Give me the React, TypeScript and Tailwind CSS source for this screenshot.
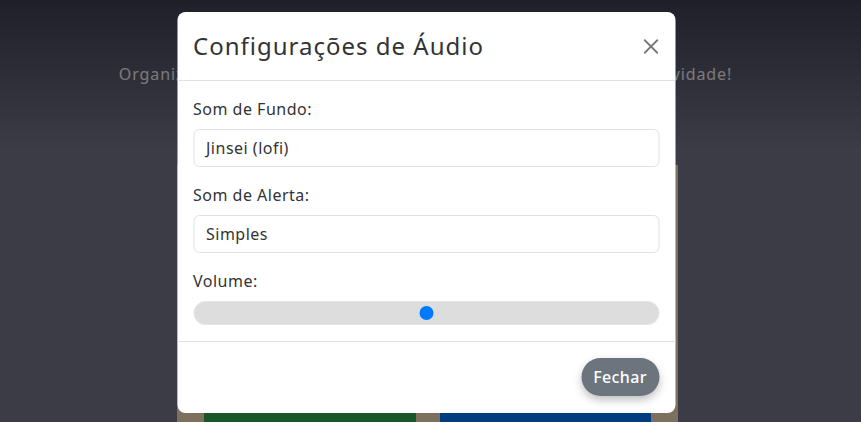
import { X } from 'lucide-react';

const font = { fontFamily: '"Noto Sans", "Liberation Sans", sans-serif' };

export default function App() {
  return (
    <div
      className="relative min-h-screen h-[422px] overflow-hidden bg-gradient-to-b from-[#404054] to-[#78788c] to-[35%] text-[#333]"
      style={font}
    >
      {/* page behind the modal */}
      <div className="flex flex-col items-center pt-[62px]">
        <p className="text-[16px] tracking-[0.9px] text-[#f4f4f4] -ml-[10px]">
          Organize suas tarefas com sons relaxantes e aumente sua produtividade!
        </p>
        <div className="mt-[79px] w-[501px] h-[300px] bg-[#fae0be] grid grid-cols-2 gap-6 px-[27px] pt-[248px] -ml-[6px]">
          <div className="bg-[#2eaa54]" />
          <div className="bg-[#007cff]" />
        </div>
      </div>

      {/* backdrop + modal */}
      <div className="absolute inset-0 bg-black/50">
        <div className="mx-auto mt-[12px] w-[498px] -translate-x-[4.5px] bg-white rounded-lg">
          <div className="flex items-center justify-between px-4 py-4 border-b border-[#dee2e6]">
            <h2 className="text-[24px] leading-[36px] tracking-[1px] text-[#333]">Configurações de Áudio</h2>
            <button className="text-[#777] -mr-[4px]">
              <X size={25} strokeWidth={1.7} />
            </button>
          </div>

          <div className="p-4 text-[16px] tracking-[0.5px]">
            <div className="mb-4">
              <label className="block leading-6 mb-2 text-[#333]">Som de Fundo:</label>
              <div className="h-[38px] border border-[#dee2e6] rounded-md px-3 flex items-center text-[#333]">
                Jinsei (lofi)
              </div>
            </div>
            <div className="mb-4">
              <label className="block leading-6 mb-2 text-[#333]">Som de Alerta:</label>
              <div className="h-[38px] border border-[#dee2e6] rounded-md px-3 flex items-center text-[#333]">
                Simples
              </div>
            </div>
            <div>
              <label className="block leading-6 mb-2 text-[#333]">Volume:</label>
              <div className="relative h-6 rounded-full bg-[#dddddd] border border-[#e6e6e6]">
                <div
                  className="absolute top-1/2 w-[14px] h-[14px] -mt-[7px] -ml-[7px] rounded-full bg-[#007bff]"
                  style={{ left: '50%' }}
                />
              </div>
            </div>
          </div>

          <div className="flex justify-end px-4 pt-4 pb-[17px] border-t border-[#dee2e6]">
            <button className="h-[38px] px-3 rounded-full bg-[#6c757d] text-white text-[16px] tracking-[0.4px] font-medium shadow-[0_4px_8px_rgba(0,0,0,0.25)]">
              Fechar
            </button>
          </div>
        </div>
      </div>
    </div>
  );
}
